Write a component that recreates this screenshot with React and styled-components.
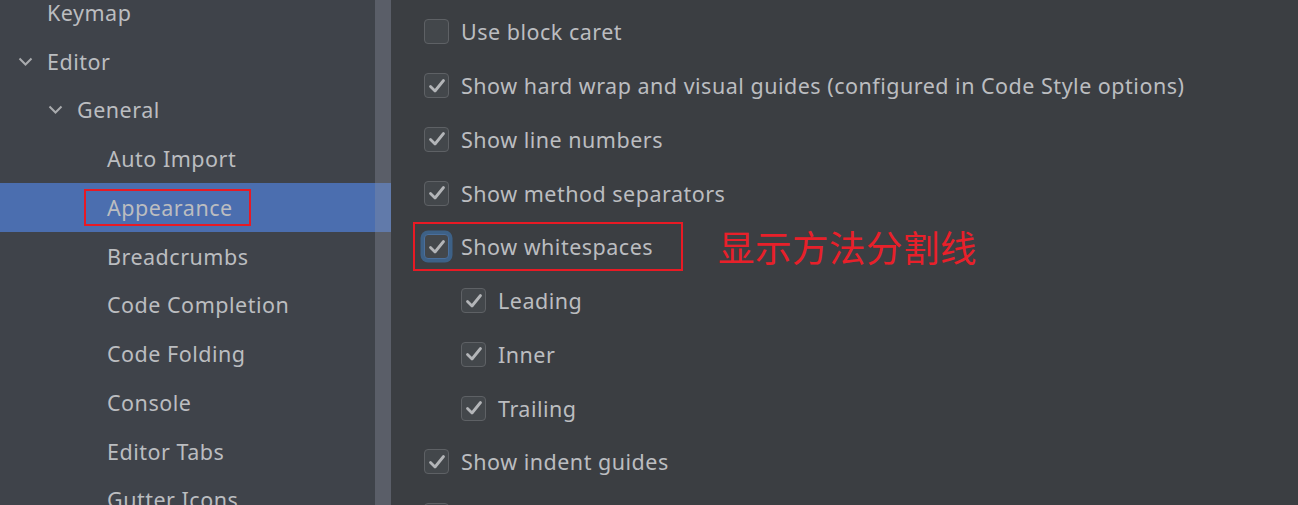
import styled, { createGlobalStyle } from 'styled-components';

const GlobalStyle = createGlobalStyle`
  html, body {
    margin: 0;
    padding: 0;
    background: #3b3e42;
    overflow: hidden;
  }
  body {
    font-family: 'Noto Sans', 'Open Sans', sans-serif;
  }
`;

const Window = styled.div`
  display: flex;
  width: 1298px;
  height: 505px;
  overflow: hidden;
  background: #3b3e42;
`;

const Sidebar = styled.div`
  position: relative;
  width: 391px;
  flex-shrink: 0;
  background: #3f434a;
  overflow: hidden;
`;

const TreeList = styled.div`
  display: flex;
  flex-direction: column;
  margin-top: -12px;
`;

const TreeRow = styled.div`
  display: flex;
  align-items: center;
  height: 48.75px;
  flex-shrink: 0;
  padding-left: ${p => p.level * 30 + 18}px;
  background: ${p => (p.selected ? '#4b6eaf' : 'transparent')};
  color: #bbbdc0;
  font-size: 21.5px;
  letter-spacing: 0.5px;
  white-space: nowrap;
`;

const Chevron = styled.span`
  display: inline-flex;
  width: 29px;
  flex-shrink: 0;
`;

const TreeLabel = styled.span`
  display: inline-flex;
  align-items: center;
  ${p =>
    p.marked &&
    `
    border: 2px solid #e81a24;
    height: 33px;
    margin-left: -23px;
    padding: 0 16px 0 21px;
  `}
`;

const ScrollTrack = styled.div`
  position: absolute;
  top: 0;
  right: 0;
  width: 16px;
  height: 100%;
  background: rgba(140, 145, 160, 0.35);
`;

const Content = styled.div`
  flex: 1;
  display: flex;
  flex-direction: column;
  padding: 5px 0 0 33px;
`;

const OptionRow = styled.div`
  display: flex;
  align-items: center;
  height: 53.75px;
  flex-shrink: 0;
  padding-left: ${p => (p.indent ? 37 : 0)}px;
`;

const OptionLabel = styled.label`
  display: inline-flex;
  align-items: center;
  gap: 12px;
  color: #bbbdc0;
  font-size: 21.5px;
  letter-spacing: 0.5px;
  white-space: nowrap;
  ${p =>
    p.marked &&
    `
    border: 2px solid #e81a24;
    height: 45px;
    margin-left: -11px;
    padding: 0 28px 0 9px;
  `}
`;

const Box = styled.span`
  display: inline-flex;
  align-items: center;
  justify-content: center;
  width: 25px;
  height: 25px;
  box-sizing: border-box;
  border-radius: 4px;
  border: 1.5px solid ${p => (p.focused ? '#4a6f9c' : '#5e6165')};
  background: #43474b;
  box-shadow: ${p => (p.focused ? '0 0 0 3.5px #3d6187' : 'none')};
  flex-shrink: 0;
`;

const Note = styled.span`
  margin-left: 35px;
  color: #e8202a;
  font-family: 'Noto Sans CJK SC', sans-serif;
  font-size: 36.5px;
  letter-spacing: 0.5px;
  white-space: nowrap;
`;

const ChevronDown = () => (
  <svg width="15" height="9" viewBox="0 0 15 9">
    <polyline points="1.5,1.5 7.5,7.5 13.5,1.5" fill="none" stroke="#a9abae" strokeWidth="2" />
  </svg>
);

const Check = () => (
  <svg width="18" height="16" viewBox="0 0 18 16">
    <polyline
      points="2.5,8.5 7,13 15.5,2.5"
      fill="none"
      stroke="#b3b5b8"
      strokeWidth="2.8"
      strokeLinecap="round"
      strokeLinejoin="round"
    />
  </svg>
);

const tree = [
  { label: 'Keymap', level: 0 },
  { label: 'Editor', level: 0, open: true },
  { label: 'General', level: 1, open: true },
  { label: 'Auto Import', level: 2 },
  { label: 'Appearance', level: 2, selected: true },
  { label: 'Breadcrumbs', level: 2 },
  { label: 'Code Completion', level: 2 },
  { label: 'Code Folding', level: 2 },
  { label: 'Console', level: 2 },
  { label: 'Editor Tabs', level: 2 },
  { label: 'Gutter Icons', level: 2 },
];

const options = [
  { label: 'Use block caret', checked: false },
  { label: 'Show hard wrap and visual guides (configured in Code Style options)', checked: true },
  { label: 'Show line numbers', checked: true },
  { label: 'Show method separators', checked: true },
  { label: 'Show whitespaces', checked: true, focused: true, marked: true },
  { label: 'Leading', checked: true, indent: true },
  { label: 'Inner', checked: true, indent: true },
  { label: 'Trailing', checked: true, indent: true },
  { label: 'Show indent guides', checked: true },
  { label: 'Show code lens on scrollbar hover', checked: false },
];

export default function App() {
  return (
    <>
      <GlobalStyle />
      <Window>
        <Sidebar>
          <TreeList>
            {tree.map(item => (
              <TreeRow key={item.label} level={item.level} selected={item.selected}>
                <Chevron>{item.open && <ChevronDown />}</Chevron>
                <TreeLabel marked={item.selected}>{item.label}</TreeLabel>
              </TreeRow>
            ))}
          </TreeList>
          <ScrollTrack />
        </Sidebar>
        <Content>
          {options.map(opt => (
            <OptionRow key={opt.label} indent={opt.indent}>
              <OptionLabel marked={opt.marked}>
                <Box focused={opt.focused}>{opt.checked && <Check />}</Box>
                {opt.label}
              </OptionLabel>
              {opt.marked && <Note>显示方法分割线</Note>}
            </OptionRow>
          ))}
        </Content>
      </Window>
    </>
  );
}
